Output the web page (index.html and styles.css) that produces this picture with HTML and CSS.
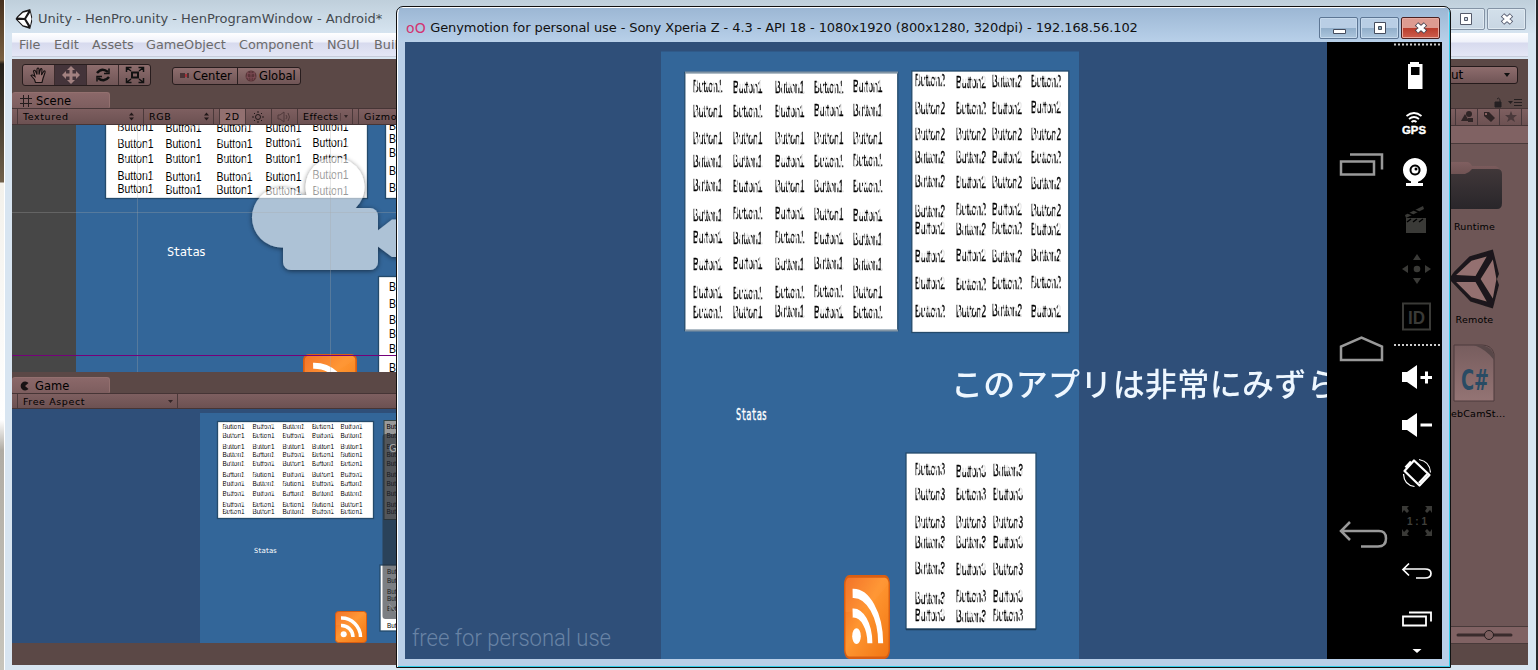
FILE: index.html
```html
<!DOCTYPE html>
<html lang="en"><head><meta charset="utf-8"><title>Unity - HenPro.unity</title>
<link rel="stylesheet" href="styles.css"></head>
<body>
<div class="desktop">
<svg width="0" height="0" class="defs"><defs>
<linearGradient id="orange" x2="1" y2="1"><stop offset="0" stop-color="#ee6420"/><stop offset=".45" stop-color="#ff9631"/><stop offset="1" stop-color="#f07512"/></linearGradient>
<linearGradient id="folderG" x2="0" y2="1"><stop offset="0" stop-color="#403739"/><stop offset="1" stop-color="#29262a"/></linearGradient>
<linearGradient id="folderTop" x2="0" y2="1"><stop offset="0" stop-color="#805f60"/><stop offset="1" stop-color="#604848"/></linearGradient>
<linearGradient id="csG" x2="0" y2="1"><stop offset="0" stop-color="#775d5e"/><stop offset="1" stop-color="#947474"/></linearGradient>
<filter id="shadow" x="-20%" y="-20%" width="140%" height="140%"><feDropShadow dx="0" dy="1" stdDeviation="2.500" flood-color="#000" flood-opacity=".9"/></filter>
<filter id="soft"><feGaussianBlur stdDeviation=".5"/></filter>
<symbol id="rss" viewBox="0 0 32 32" preserveAspectRatio="none"><rect x=".5" y=".5" width="31" height="31" rx="3" fill="url(#orange)" stroke="#d95e12"/><path d="M1 14Q16 15 31 3V4Q31 1 28 1H4Q1 1 1 4Z" fill="#ff9a45" opacity=".25"/><circle cx="8.700" cy="23.300" r="3" fill="#fff"/><path d="M6 14.500a11.500 11.500 0 0 1 12 11.500M6 7a19 19 0 0 1 19.500 19" fill="none" stroke="#fff" stroke-width="3.500"/></symbol>
<symbol id="unity" viewBox="0 0 50 58"><path d="M0 29 5 22 20 7 23 6 43 0 49 24 47 29 49 35 43 58 21 51Z" fill="#1b191a"/><path d="M7 25 22 11 37 7 26 26ZM7 32H26L37 51 22 47ZM31 29 43 10 46.500 29 43 48Z" class="facet"/></symbol>
</defs></svg>

<section class="unity">
 <header class="u-title"><svg class="u-logo light" viewBox="0 0 50 58"><use href="#unity"/></svg><span>Unity - HenPro.unity - HenProgramWindow - Android*</span>
  <div class="u-ctl"><i><svg width="16" height="16"><path d="M2.500 2.500h11v11h-11Z" fill="#fff" stroke="#555a6a"/><path d="M6.500 6.500h3v3h-3Z" fill="#ccd8e4" stroke="#555a6a"/></svg></i><i><svg width="16" height="16"><path d="m3.500 4 9 8m0-8-9 8" stroke="#50566a" stroke-width="5"/><path d="m4 4.500 8 7m0-7-8 7" stroke="#fff" stroke-width="3"/></svg></i></div></header>
 <nav class="menu"><span>File</span><span>Edit</span><span>Assets</span><span>GameObject</span><span>Component</span><span>NGUI</span><span>Build</span></nav>
 <div class="client">
  <div class="left">
   <div class="tools">
    <div class="toolset"><b><svg width="18" height="18"><path d="m5.500 16.500-1-3-3.500-4q1-1.500 4 1L3.500 5q1-1.500 2 0l1.500 3.500V3q1-2 2 0v5.500l1.500-5.500q1-1 1.500.5l-.5 5.500 2.500-4q1.500-.5 1 1.500l-2 6-1 4Z" fill="#94706f" stroke="#171112" stroke-width="1.100"/></svg></b><b class="on"><svg width="18" height="18"><path d="m9 0 4 4h-2.500v3.500H14V5l4 4-4 4v-2.500h-3.500V14H13l-4 4-4-4h2.500v-3.500H4V13L0 9l4-4v2.500h3.500V4H5Z" fill="#a28180"/></svg></b><b><svg width="18" height="18" fill="none" stroke="#111" stroke-width="2.500"><path d="M3 7q5-6 11-1M15 11q-5 6-11 1"/><path d="M15 2.500v5h-5M3 15.500v-5h5" stroke-width="1.500"/></svg></b><b><svg width="20" height="18" fill="none" stroke="#111"><path d="M7 6.500h6v5H7Z" stroke-width="2"/><path d="m2 2 4 3M18 2l-4 3M2 16l4-3M18 16l-4-3M1.500 6V1.500h5M13.500 1.500h5V6M1.500 12v4.500h5M13.500 16.500h5V12" stroke-width="1.500"/></svg></b></div>
    <div class="pivot"><b><svg width="12" height="8"><path d="M1 1h5v5H1Z" fill="#4a3436"/><path d="M6 2h2v3H6Z" fill="#aa3038"/><path d="M9 1v5" stroke="#4a3436" stroke-width="2"/></svg><span>Center</span></b><b><svg width="12" height="12"><circle cx="6" cy="6" r="5.500" fill="#593438"/><path d="M2 3q4 2 8 0M1 7q5 2 10 0M6 1v10M3 2q-2 4 1 8M9 2q2 4-1 8" fill="none" stroke="#85505a" stroke-width=".7"/></svg><span>Global</span></b></div>
   </div>
   <div class="tabs"><div class="tab"><svg width="12" height="12"><path d="M3.500 0v12M8.500 0v12M0 3.500h12M0 8.500h12" stroke="#241c1d"/></svg><span>Scene</span></div></div>
   <div class="bar scene-bar"><span>Textured<svg width="5" height="9"><path d="m0 3.500 2.500-3 2.500 3Zm0 2 2.500 3 2.500-3Z" fill="#221819"/></svg></span><span>RGB<svg width="5" height="9"><path d="m0 3.500 2.500-3 2.500 3Zm0 2 2.500 3 2.500-3Z" fill="#221819"/></svg></span><span class="lit">2D</span><span><svg width="12" height="12" stroke="#211819" fill="none"><circle cx="6" cy="6" r="2.500"/><path d="M6 0v2M6 10v2M0 6h2M10 6h2M2 2l1 1M9 9l1 1M10 2 9 3M3 9l-1 1"/></svg></span><span><svg width="14" height="12" fill="none" stroke="#4f393a"><path d="M1 4h2l4-3v10L3 8H1Z"/><path d="M9 4q2 2 0 4M11 2q3 4 0 8"/></svg></span><span>Effects<svg width="9" height="8"><path d="M.5 0v8" stroke="#5b4243"/><path d="M4 2h4L6 5Z" fill="#332526"/></svg></span><span>Gizmos</span></div>
   <svg class="scene" viewBox="12 125 384 247"><rect x="12" y="125" width="64" height="247" fill="#474747"/><rect x="76" y="125" width="320" height="247" fill="#336699"/>
    <g class="paper"><rect x="105.500" y="110" width="262" height="88.500"/><rect x="385.500" y="110" width="40" height="88.500"/><rect x="378.500" y="276.500" width="60" height="110"/></g>
    <g id="scene-labels"></g>
    <use href="#rss" x="303" y="354" width="54" height="54"/>
    <text x="167" y="256" class="mono" textLength="39">Statas</text>
    <g filter="url(#shadow)" opacity=".6" fill="#fff"><circle cx="335" cy="187" r="29.500"/><circle cx="282" cy="217.500" r="30"/><rect x="283" y="208" width="95" height="62" rx="8"/><path d="M300 195h30v30h-30ZM376 232 392 219.500H402V257H392L376 245Z"/></g>
    <path d="M12 212.500H396M137.500 125V372M330.500 125V372" stroke="#aaa" stroke-opacity=".3"/><path d="M12 355.500H396" stroke="#760079"/></svg>
   <div class="tabs second"><div class="tab"><svg width="10" height="10"><path d="M8.500 2A4.500 4.500 0 1 0 8.500 8L5 5Z" fill="#171213"/></svg><span>Game</span></div></div>
   <div class="bar game-bar"><span>Free Aspect<svg width="6" height="5"><path d="M0 1h5L2.500 4Z" fill="#332526"/></svg></span></div>
   <svg class="game" viewBox="12 409 384 234"><rect x="12" y="409" width="384" height="234" fill="#2f4f79"/><rect x="200" y="413" width="196" height="230" fill="#336699"/>
    <g class="paper"><rect x="217.500" y="421.500" width="156" height="97"/><rect x="380" y="565" width="40" height="66"/></g><g id="game-labels"></g>
    <text x="254" y="553" class="mono tiny" textLength="23">Statas</text><use href="#rss" x="335" y="611" width="32" height="32"/>
    <rect x="384" y="420.500" width="16" height="99" fill="#999" stroke="#344"/><g id="game-under"></g><rect x="382.500" y="434" width="20" height="185" rx="3" fill="#252a31" opacity=".6"/><text x="389" y="452" class="overlay">G</text><path d="m389 604 7 8m-6-1v-6" stroke="#999"/></svg>
   <div class="foot"></div>
  </div>
  <aside class="right">
   <div class="layout-row"><div class="layout">ut<svg width="7" height="5"><path d="M0 0h6L3 4Z" fill="#111"/></svg></div></div>
   <div class="lockrow"><svg width="30" height="12"><path d="M2 6h6v5H2Z" fill="#252022" stroke="#252022"/><path d="M7 6V3.500q-1.500-2.500-3-.5" fill="none" stroke="#252022"/><path d="M15 5h5l-2.500 3Z" fill="#251f20"/><path d="M21 3.500h8M21 6.500h8M21 9.500h8" stroke="#251f20"/></svg></div>
   <div class="filters"><i></i><i><svg width="12" height="12" fill="#302526"><path d="m4 3 4 7H0Z"/><circle cx="8" cy="3" r="3"/><path d="M7 7h5v4H7Z"/></svg></i><i><svg width="12" height="12"><path d="M1 1h5l6 6-4 4-7-6Z" fill="#302526"/><circle cx="3" cy="3" r="1" fill="#a77"/></svg></i><i><svg width="12" height="12"><path d="m6 0 1.500 4H12L8.500 7 10 11 6 8.500 2 11 3.500 7 0 4h4.500Z" fill="#4a393b"/></svg></i></div>
   <div class="crumb"></div>
   <div class="assets">
    <figure><svg width="78" height="55"><path d="M-5 20V5Q-4 2 0 2H17Q20 2 22 6H45Q50 7 50 12V25H-5Z" fill="url(#folderTop)"/><path d="M-5 14H15Q19 13 22 9H47Q52 9 52 14V43Q52 49 47 49H-5Z" fill="url(#folderG)"/></svg><figcaption>Runtime</figcaption></figure>
    <figure><svg width="78" height="64"><g filter="url(#soft)"><use href="#unity" x="-1" y="0" width="51" height="60"/></g></svg><figcaption>Remote</figcaption></figure>
    <figure><svg width="78" height="65"><path d="M4 3H32Q42 3 44 12V59H4Z" fill="url(#csG)" stroke="#4c3b3c"/><path d="M24 3Q42 2 44 14V18Q37 8 24 3Z" fill="#584748"/><text x="11" y="48" class="cs" textLength="28" lengthAdjust="spacingAndGlyphs">C#</text></svg><figcaption>ebCamSt...</figcaption></figure>
   </div>
   <div class="slider"><svg width="78" height="15"><path d="M8 8H61" stroke="#392b2c" stroke-width="3" stroke-linecap="round"/><circle cx="39" cy="8" r="4.500" fill="#7b5e5e" stroke="#241c1d"/></svg></div><div class="rfoot"></div>
  </aside>
 </div>
</section>

<section class="geny">
 <header class="g-title"><em>oO</em><span>Genymotion for personal use - Sony Xperia Z - 4.3 - API 18 - 1080x1920 (800x1280, 320dpi) - 192.168.56.102</span>
 <div class="g-ctl"><i><svg width="16" height="16"><path d="M2.500 9.500h12v4h-12Z" fill="#fff" stroke="#454c5d"/></svg></i><i><svg width="16" height="16"><path d="M2.500 2.500h11v11h-11Z" fill="#fff" stroke="#454c5d"/><path d="M6.500 6.500h3v3h-3Z" fill="#8ab" stroke="#454c5d"/></svg></i><i class="close"><svg width="16" height="16"><path d="m3.500 4 9 8m0-8-9 8" stroke="#44424e" stroke-width="5"/><path d="m4 4.500 8 7m0-7-8 7" stroke="#fff" stroke-width="3"/></svg></i></div></header>
 <div class="g-body">
  <svg class="phone" viewBox="405 42 922 617"><rect x="405" y="42" width="922" height="617" fill="#2f4f79"/><rect x="661" y="51.500" width="418" height="608" fill="#336699"/>
   <g class="paper"><rect x="684.800" y="72.500" width="213" height="258"/><rect x="911.800" y="71" width="157" height="261.500"/><rect x="906" y="453" width="130" height="176"/></g>
   <path d="M685 330.500H898M685 72.500H898" stroke="#8295a5" stroke-width="2"/><path d="M906 629.500H1036" stroke="#1d3c58" stroke-width="1.500"/>
   <g id="phone-labels" class="blurred"></g>
   <text x="736" y="420" class="mono phone-status" textLength="31" lengthAdjust="spacingAndGlyphs">Statas</text>
   <g class="blurred"><use href="#rss" x="844" y="575" width="46" height="84"/>
   <text x="951" y="395.500" class="jp" textLength="420">このアプリは非常にみずらい</text></g>
   <text x="412" y="646" class="watermark" textLength="199" lengthAdjust="spacingAndGlyphs">free for personal use</text></svg>
  <svg class="rail" viewBox="1327 42 115 617"><rect x="1327" y="42" width="115" height="617"/>
   <path d="M1394 44.500H1441M1394 345H1441" stroke="#ccc" stroke-width="2" stroke-dasharray="2 2"/>
   <g fill="none" stroke="#999" stroke-width="2.500"><path d="M1341 161.500h33v13h-33ZM1350 154.500h32v15M1341 360v-13.500l20.500-9 20.500 9V360ZM1361 546.500h17q8 0 8-8t-8-7.500h-36M1350 522l-9 9 9 9"/></g>
   <g fill="#fff"><path fill-rule="evenodd" d="M1408 64h2v-2h9v2h3.500v25H1408ZM1411 67v8h8.500v-8Z"/><path fill-rule="evenodd" d="M1415 158a12 12 0 1 1-.1 0ZM1415 164.500a5.500 5.500 0 1 0 .1 0Z"/><circle cx="1415" cy="170" r="3.500"/><circle cx="1416" cy="169" r="1.500" fill="#000"/><path d="M1411 180h7v3h5v3h-17v-3h5ZM1402 372h5l10-7v24l-10-7h-5ZM1402 420h5l10-7v24l-10-7h-5ZM1420.500 376h4.500v-4.500h3V376h4v3h-4v4.500h-3V379h-4.500ZM1420.500 423.500h11.500v3h-11.500ZM1412.500 649h9l-4.500 4Z"/></g>
   <g fill="none" stroke="#fff" stroke-width="1.800"><path d="M1406.500 116q7.500-6 15 0M1409 119q5-4 10 0M1411.500 122q2.500-2 5 0"/></g><text x="1402" y="134" class="gps" textLength="24" lengthAdjust="spacingAndGlyphs">GPS</text>
   <g fill="#3a3a37"><path d="M1406 218h20v15h-20ZM1405 215l18-9 1 3-18 9Z"/><path d="m1407 222 4-3m2 3 4-3m2 3 4-3M1408 213l5 2m1-5 5 2" stroke="#000" stroke-width="1.500"/><circle cx="1417" cy="269" r="3.300"/><path d="m1413 260 4-6 4 6ZM1413 278l4 6 4-6ZM1408 265l-6 4 6 4ZM1425 265l6 4-6 4Z"/></g><path d="M1403 303.500h27v26h-27Z" fill="none" stroke="#3a3a37" stroke-width="2"/><text x="1408" y="324" class="id" textLength="17" lengthAdjust="spacingAndGlyphs">ID</text>
   <g fill="none" stroke="#fff"><path d="M1404.500 471 1414 460.500 1429.500 475 1419.500 485.500Z" stroke-width="2.200" stroke-linejoin="round"/><path d="m1405.500 467.500 5.500-6M1419 483l8.500-9" stroke-width="2.500"/><path d="M1419 459.500q11 2 11.500 13M1403.500 474q.5 11 11 12.500" stroke-width="1.200"/><path d="M1409 563.500l-6 6 6 6M1403 569h22q6 0 6 4.500t-6 4.500h-9" stroke-width="1.700"/><path d="M1403 616.500h23v9h-23ZM1409 612.500h22v9" stroke-width="1.800"/></g>
   <g fill="#3a3a37"><path d="M1402 506h7l-2 2 2 3-2 2-3-3-2 3ZM1432 506h-7l2 2-2 3 2 2 3-3 2 3ZM1402 536h7l-2-2 2-3-2-2-3 3-2-3ZM1432 536h-7l2-2-2-3 2-2 3 3 2-3Z"/></g><text x="1407" y="525" class="ratio" textLength="20">1:1</text></svg>
 </div>
</section>
</div>
<script src="labels.js"></script>
</body></html>
```

FILE: styles.css
```css
*{box-sizing:border-box}
body{margin:0;font-family:"DejaVu Sans",Verdana,sans-serif;overflow:hidden}
i,em{font-style:normal}b{font-weight:normal}
.desktop{position:relative;width:1538px;height:670px;overflow:hidden;background:linear-gradient(#47311f 0,#7a6242 60px,#24201a 64px,#70604b 182px,#f3f1eb 183px,#fff 420px,#b0aca4 450px,#c8c5bc 670px)}
.defs{position:absolute}
.facet{fill:var(--f,#94706f)}.light{--f:#fff}
.blurred{filter:blur(.4px)}
.unity{position:absolute;left:4px;top:0;width:1534px;height:674px;background:#d8e5f1;border-left:1px solid #fff;border-right:2px solid #28282b;padding:0 8px 9px 7px;display:flex;flex-direction:column}
.u-title{height:33px;display:flex;align-items:center;margin:0 -7px;padding:4px 9px 0 10px;background:linear-gradient(#bfcfdb,#d6e4f0);color:#444a50;font-size:13px;letter-spacing:-.02px;flex:none}
.u-logo{width:18px;height:20px;margin-right:5px}
.u-ctl{margin-left:auto;display:flex;gap:2px}
.u-ctl i{width:39px;height:22px;border:1px solid #8493a5;border-radius:2px;display:grid;place-items:center;background:linear-gradient(#d2dfea,#c8d6e3);box-shadow:inset 0 0 0 1px #dfe9f1}
.menu{height:24px;flex:none;background:linear-gradient(#fff,#eff1fa 9px,#d7daee 10px,#e4e7f5);display:flex;align-items:center;font-size:12.800px;color:#6b6b6b;border-bottom:1px solid #c7ccda}
.menu span:nth-child(1){width:42px;padding-left:7px}.menu span:nth-child(2){width:38px}.menu span:nth-child(3){width:54px}.menu span:nth-child(4){width:93px}.menu span:nth-child(5){width:88px}.menu span:nth-child(6){width:47px}
.client{margin-top:2px;height:606px;flex:none;display:flex;justify-content:space-between;background:#5b4846}
.left{width:384px;display:flex;flex-direction:column;overflow:hidden}
.tools{height:33px;display:flex;align-items:center;padding-left:10px;gap:22px;flex:none}
.toolset,.pivot{display:flex;border:1px solid #281d1e;border-radius:3px;background:linear-gradient(#8e6d6d,#705556)}
.toolset{height:22px;position:relative;top:-1px}.toolset b{width:32px;display:grid;place-items:center;border-right:1px solid #3c2c2d}.toolset b:last-child{border:0;width:31px}.toolset .on{background:#44343a}
.pivot{height:18px;font-size:11.500px;margin-left:-1px}.pivot b{display:flex;align-items:center;width:64px;padding-left:6px;gap:2px;white-space:nowrap}.pivot b+b{border-left:1px solid #2b2021;width:63px;padding-left:7px}
.tabs{height:16px;flex:none}.tabs.second{height:21px;padding-top:5px}
.tab{height:17px;width:98px;background:linear-gradient(#8b6869,#7c5d5e);border:1px solid #93706f;border-width:1px 1px 0 0;border-radius:3px;display:flex;align-items:center;gap:4px;padding-left:8px;font-size:11.500px}.second .tab{gap:5px}
.bar{height:17px;flex:none;border:1px solid #463536;border-left:0;border-right:0;background:linear-gradient(#7e5f60,#6c5152);display:flex;font-size:9.500px;letter-spacing:.6px;padding-left:5px}
.bar span{border-left:1px solid #4b393a;padding-left:5px;display:flex;align-items:center;justify-content:space-between;flex:none}
.scene-bar span:nth-child(1){width:121px;padding-right:4px}.scene-bar span:nth-child(2){border-right:1px solid #4b393a;width:71px;padding-right:4px;margin-left:5px}
.scene-bar .lit{width:26px;background:#927070;margin-left:5px}.scene-bar span:nth-child(4){width:26px;padding-left:6px}.scene-bar span:nth-child(5){width:26px}.scene-bar span:nth-child(6){width:56px;padding-right:3px;border-right:1px solid #4b393a;letter-spacing:.4px}.scene-bar span:nth-child(7){margin-left:5px}
.game-bar{height:16px}.game-bar span{width:161px;border-right:1px solid #4b393a;padding-right:3px}
.scene{width:384px;height:247px;flex:none}.game{width:384px;height:234px;flex:none}.foot{height:22px}
.paper{fill:#fff;stroke:#244a6b;stroke-width:1.300}
.label{font-family:"Liberation Sans",sans-serif;fill:#000}
#phone-labels .label{stroke:#000;stroke-width:.4}
.overlay{fill:#aaa;font-size:10px}
.mono{font-family:"DejaVu Sans Mono",monospace;font-size:12px;fill:#fff}.tiny{font-size:7px}.phone-status{font-size:16px;stroke:#fff;stroke-width:.4}
.right{width:78px;background:#6e5656;display:flex;flex-direction:column;overflow:hidden;font-size:10px}
.layout-row{background:#5b4846;height:33px;flex:none;padding:7px 10px 0 0}.layout{margin-left:-6px;height:18px;border:1px solid #241a1b;border-radius:3px;background:linear-gradient(#8e6d6d,#705556);display:flex;align-items:center;justify-content:space-between;padding:0 6px;font-size:12px}
.lockrow{background:#5b4846;height:16px;flex:none;text-align:right;padding:4px 5px 0 0;line-height:0}
.filters{height:18px;flex:none;border:1px solid #463536;border-width:1px 0;background:linear-gradient(#7e5f60,#6c5152);display:flex}.filters i{width:22px;border-right:1px solid #46373a;display:grid;place-items:center;flex:none}.filters i:first-child{width:6px}
.crumb{height:18px;flex:none;background:#806263;border-bottom:1px solid #493a3a}
.assets{height:482px;flex:none;padding-top:16px}.assets figure{margin:0;height:93px}.assets svg{display:block}.assets figcaption{width:49px;text-align:center;font-size:9.500px;line-height:13px;letter-spacing:.2px;white-space:nowrap}
.assets figure:first-child{height:89px}.assets figure:first-child figcaption{padding-top:5px}.assets figure:last-child figcaption{text-align:left;padding-left:1px}
.cs{font-family:"DejaVu Sans",sans-serif;font-weight:bold;font-size:28px;fill:#294b64}
.slider{height:18px;flex:none;background:#806263;border:1px solid #493a3a;border-width:1px 0}.rfoot{flex:1;background:#5b4846}
.geny{position:absolute;left:396px;top:6px;width:1055px;height:662px;border:1px solid #111;border-radius:7px 7px 0 0;background:#b9cfe8;box-shadow:inset 1px 1px #fff,inset -1px -1px #31cce9;padding:1px 8px 8px}
.g-title{height:34px;display:flex;align-items:center;background:linear-gradient(#9cb7d4,#b8d0e9);margin:0 -6px;padding:5px 0 0 7px;font-size:13px;color:#111}.g-title em{color:#d33470;font-size:14px;margin-right:4px;letter-spacing:.3px}.g-title span{letter-spacing:-.092px}
.g-ctl{margin-left:auto;margin-right:8px;display:flex;gap:2px}.g-ctl i{width:39px;height:22px;border:1px solid #5d7694;border-radius:2px;box-shadow:inset 0 0 0 1px #c6d9ec;background:linear-gradient(#b9cee5 48%,#91aeca 50%,#adc6dd);display:grid;place-items:center}.g-ctl .close{border-color:#4b2020;background:linear-gradient(#dd9b91 48%,#b93c2c 50%,#ce5e4e);box-shadow:inset 0 0 0 1px #e9aaa0}
.g-body{height:617px;display:flex}.phone{width:922px;flex:none}.rail{width:115px;flex:none}
.jp{font-family:"Noto Sans CJK JP",sans-serif;font-weight:500;font-size:32px;fill:#eef7ff}
.watermark{font-family:Roboto,sans-serif;font-weight:300;font-size:24px;fill:#6883a5}
.gps,.id,.ratio{font-family:"Liberation Sans",sans-serif;font-weight:bold}.gps{font-size:11.500px;fill:#fff;stroke:#fff;stroke-width:.4}.id{font-size:19px;fill:#3a3a37}.ratio{font-size:10px;fill:#40403c}
```

FILE: labels.js
```js
const NS = 'http://www.w3.org/2000/svg';

// Squeezed bitmap-like captions: glyphs are scaled to width, with thin gaps where sampling drops columns.
function labels(id, text, xs, ys, width, size, gaps, opacity) {
  const group = document.getElementById(id);
  ys.forEach((y, r) => xs.forEach((x, c) => {
    const seed = (r * 7 + c * 5 + r * c * 3) % 11;
    const base = y + (seed % 3 - 1) * size / 18;
    const t = document.createElementNS(NS, 'text');
    t.setAttribute('x', x);
    t.setAttribute('y', base);
    t.setAttribute('class', 'label');
    t.setAttribute('font-size', size);
    t.setAttribute('textLength', width);
    t.setAttribute('lengthAdjust', 'spacingAndGlyphs');
    t.textContent = text;
    group.append(t);
    for (let i = 0; i < gaps; i++) {
      const gap = document.createElementNS(NS, 'rect');
      const upper = (i + seed) % 3;
      gap.setAttribute('x', x + width * (((seed + i * 4) % 19) / 20 + 0.04));
      gap.setAttribute('y', base - size * (upper ? 0.8 : 0.4));
      gap.setAttribute('width', width / 15);
      gap.setAttribute('height', size * (upper ? 0.5 : 0.45));
      gap.setAttribute('fill', '#fff');
      gap.setAttribute('opacity', opacity);
      group.append(gap);
    }
  }));
}

labels('scene-labels', 'Button1', [117.500, 165.500, 216.500, 265.500, 312.500], [131.500, 147.500, 163.500, 180, 194], 36, 12, 4, 0.6);
labels('scene-labels', 'Button2', [389], [131, 143, 158, 175, 193], 36, 12, 0, 0);
labels('scene-labels', 'Button3', [389], [292, 308, 325, 338, 354, 371], 36, 12, 0, 0);
const gameRows = [429, 438, 449, 457, 466, 477, 486, 496, 507, 514];
labels('game-labels', 'Button1', [222.500, 252.500, 282.500, 312, 340.500], gameRows, 22, 7.500, 6, 0.7);
labels('game-labels', 'Button3', [387], [628], 22, 7.500, 0, 0);
labels('game-under', 'Button2', [386.500], gameRows, 22, 7.500, 0, 0);
labels('game-under', 'Button3', [387], [574, 583, 594, 601, 611], 22, 7.500, 0, 0);
labels('phone-labels', 'Button1', [693, 733, 775, 814, 853], [92.500, 116.500, 144.500, 166.500, 191.500, 220, 244, 269.500, 298, 317.500], 29.500, 16, 10, 0.9);
labels('phone-labels', 'Button2', [915, 956, 992, 1031], [87, 114, 141, 162.500, 188, 216, 235, 261.500, 289, 316.500], 30, 16, 10, 0.9);
labels('phone-labels', 'Button3', [915, 956, 993], [476, 500, 529, 547.500, 575, 603, 622], 30, 16, 10, 0.9);
```
